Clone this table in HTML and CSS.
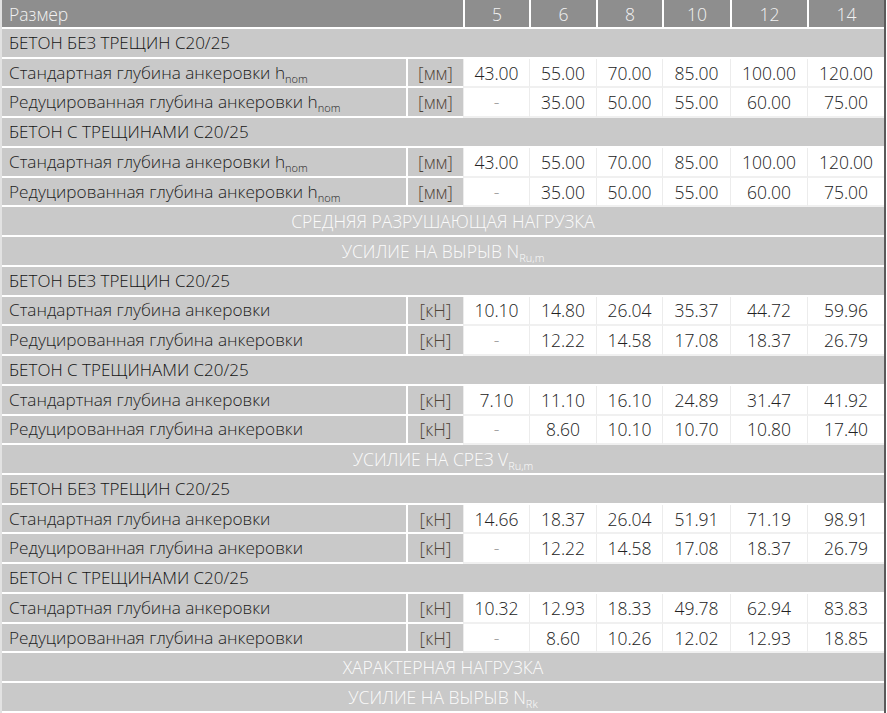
FILE: index.html
```html
<!DOCTYPE html>
<html lang="ru">
<head>
<meta charset="utf-8">
<title>Размер</title>
<link rel="stylesheet" href="styles.css">
</head>
<body>
<div class="frame">
<table class="spec">
  <colgroup>
    <col class="c-label"><col class="c-unit"><col class="c-5"><col class="c-6"><col class="c-8"><col class="c-10"><col class="c-12"><col class="c-14">
  </colgroup>
  <thead>
    <tr class="head">
      <th colspan="2" class="h-left">Размер</th><th>5</th><th>6</th><th>8</th><th>10</th><th>12</th><th>14</th>
    </tr>
  </thead>
  <tbody>
    <tr class="sec"><td colspan="8">БЕТОН БЕЗ ТРЕЩИН С20/25</td></tr>
    <tr><td class="lab">Стандартная глубина анкеровки h<sub>nom</sub></td><td class="unit">[мм]</td><td>43.00</td><td>55.00</td><td>70.00</td><td>85.00</td><td>100.00</td><td>120.00</td></tr>
    <tr><td class="lab">Редуцированная глубина анкеровки h<sub>nom</sub></td><td class="unit">[мм]</td><td class="dash">-</td><td>35.00</td><td>50.00</td><td>55.00</td><td>60.00</td><td>75.00</td></tr>
    <tr class="sec"><td colspan="8">БЕТОН С ТРЕЩИНАМИ С20/25</td></tr>
    <tr><td class="lab">Стандартная глубина анкеровки h<sub>nom</sub></td><td class="unit">[мм]</td><td>43.00</td><td>55.00</td><td>70.00</td><td>85.00</td><td>100.00</td><td>120.00</td></tr>
    <tr><td class="lab">Редуцированная глубина анкеровки h<sub>nom</sub></td><td class="unit">[мм]</td><td class="dash">-</td><td>35.00</td><td>50.00</td><td>55.00</td><td>60.00</td><td>75.00</td></tr>
    <tr class="mid"><td colspan="8">СРЕДНЯЯ РАЗРУШАЮЩАЯ НАГРУЗКА</td></tr>
    <tr class="mid"><td colspan="8">УСИЛИЕ НА ВЫРЫВ N<sub>Ru,m</sub></td></tr>
    <tr class="sec"><td colspan="8">БЕТОН БЕЗ ТРЕЩИН С20/25</td></tr>
    <tr><td class="lab">Стандартная глубина анкеровки</td><td class="unit">[кН]</td><td>10.10</td><td>14.80</td><td>26.04</td><td>35.37</td><td>44.72</td><td>59.96</td></tr>
    <tr><td class="lab">Редуцированная глубина анкеровки</td><td class="unit">[кН]</td><td class="dash">-</td><td>12.22</td><td>14.58</td><td>17.08</td><td>18.37</td><td>26.79</td></tr>
    <tr class="sec"><td colspan="8">БЕТОН С ТРЕЩИНАМИ С20/25</td></tr>
    <tr><td class="lab">Стандартная глубина анкеровки</td><td class="unit">[кН]</td><td>7.10</td><td>11.10</td><td>16.10</td><td>24.89</td><td>31.47</td><td>41.92</td></tr>
    <tr><td class="lab">Редуцированная глубина анкеровки</td><td class="unit">[кН]</td><td class="dash">-</td><td>8.60</td><td>10.10</td><td>10.70</td><td>10.80</td><td>17.40</td></tr>
    <tr class="mid"><td colspan="8">УСИЛИЕ НА СРЕЗ V<sub>Ru,m</sub></td></tr>
    <tr class="sec"><td colspan="8">БЕТОН БЕЗ ТРЕЩИН С20/25</td></tr>
    <tr><td class="lab">Стандартная глубина анкеровки</td><td class="unit">[кН]</td><td>14.66</td><td>18.37</td><td>26.04</td><td>51.91</td><td>71.19</td><td>98.91</td></tr>
    <tr><td class="lab">Редуцированная глубина анкеровки</td><td class="unit">[кН]</td><td class="dash">-</td><td>12.22</td><td>14.58</td><td>17.08</td><td>18.37</td><td>26.79</td></tr>
    <tr class="sec"><td colspan="8">БЕТОН С ТРЕЩИНАМИ С20/25</td></tr>
    <tr><td class="lab">Стандартная глубина анкеровки</td><td class="unit">[кН]</td><td>10.32</td><td>12.93</td><td>18.33</td><td>49.78</td><td>62.94</td><td>83.83</td></tr>
    <tr><td class="lab">Редуцированная глубина анкеровки</td><td class="unit">[кН]</td><td class="dash">-</td><td>8.60</td><td>10.26</td><td>12.02</td><td>12.93</td><td>18.85</td></tr>
    <tr class="mid"><td colspan="8">ХАРАКТЕРНАЯ НАГРУЗКА</td></tr>
    <tr class="mid"><td colspan="8">УСИЛИЕ НА ВЫРЫВ N<sub>Rk</sub></td></tr>
  </tbody>
</table>
</div>
</body>
</html>
```

FILE: styles.css
```css
html, body {
  margin: 0;
  padding: 0;
  background: #ffffff;
}

.frame {
  width: 882px;
  border-left: 2px solid #e2e2e2;
  border-right: 2px solid #5a5a5a;
}

.spec {
  width: 882px;
  table-layout: fixed;
  border-collapse: separate;
  border-spacing: 0;
  font-family: "Open Sans", "Liberation Sans", sans-serif;
  font-size: 17.5px;
  font-weight: 300;
  color: #222222;
}

.c-label { width: 404px; }
.c-unit { width: 57px; }
.c-5 { width: 66px; }
.c-6 { width: 67px; }
.c-8 { width: 66px; }
.c-10 { width: 68px; }
.c-12 { width: 77px; }
.c-14 { width: 77px; }

.spec th,
.spec td {
  box-sizing: border-box;
  height: 29.74px;
  padding: 0;
  text-align: center;
  vertical-align: middle;
  line-height: 20px;
  white-space: nowrap;
  background: #ffffff;
  border-bottom: 2px solid #f0f0f0;
  border-left: 1px solid #ececec;
}

.head th {
  height: 29px;
  background: #8e8e8e;
  color: #f2f2f2;
  font-weight: 300;
  border-bottom: 2px solid #ffffff;
  border-left: 2px solid #ffffff;
}

.head .h-left {
  text-align: left;
  padding-left: 7px;
  border-left: 0;
}

.spec .sec td {
  text-align: left;
  padding-left: 7px;
  font-size: 17px;
  background: #c9c9c9;
  color: #141414;
  border-bottom: 2px solid #ffffff;
  border-left: 0;
}

.spec .mid td {
  background: #c9c9c9;
  color: #fbfbfb;
  border-bottom: 2px solid #ffffff;
  border-left: 0;
}

.spec td.lab {
  text-align: left;
  padding-left: 7px;
  font-size: 17.2px;
  background: #c9c9c9;
  color: #222222;
  border-bottom: 2px solid #ffffff;
  border-left: 0;
}

.spec td.unit {
  background: #c9c9c9;
  color: #4f4438;
  border-bottom: 2px solid #ffffff;
  border-left: 2px solid #ffffff;
}

.spec td.dash {
  color: #9a9a9a;
}

sub {
  font-size: 11px;
  line-height: 0;
  vertical-align: -4px;
}
```
